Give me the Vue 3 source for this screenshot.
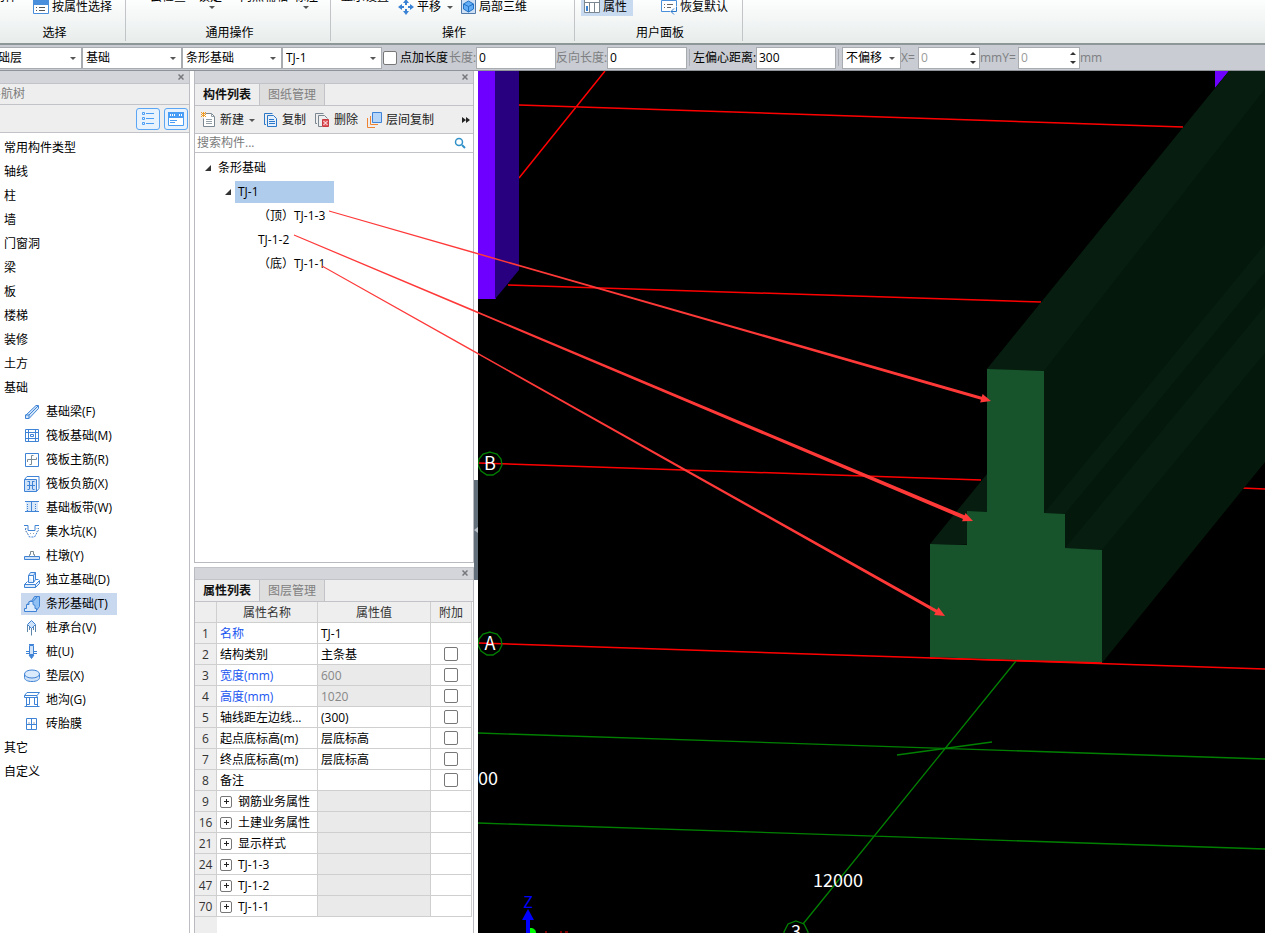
<script setup>
import { ref } from 'vue'

const categories = ['常用构件类型', '轴线', '柱', '墙', '门窗洞', '梁', '板', '楼梯', '装修', '土方', '基础']
const tailCategories = ['其它', '自定义']

const foundations = [
  { name: '基础梁(F)', icon: '<path d="M2 11 12 1.5h2.500v3L5 14.500H1.500V11z" fill="#d3e5f8"/><path d="M1.500 11H5v3.500M5 11l9-9"/>' },
  { name: '筏板基础(M)', icon: '<path d="M1.500 1.500h13v12h-13z"/><path d="M4.500 1.500v12M11.500 1.500v12M1.500 4.500h13M1.500 10.500h13"/><path d="M6.500 6.500h3v2h-3z"/>' },
  { name: '筏板主筋(R)', icon: '<path d="M1.500 1.500h13v13h-13z"/><path d="M9.500 3.500h-2v9h-2M3.500 10V7.500h9V5.500" stroke="#7d8b95"/>' },
  { name: '筏板负筋(X)', icon: '<path d="M.5 3.500 3 .5h12v12l-2.500 3"/><path d="M.5 3.500h12v12H.5z" fill="#cfe2f7"/><path d="M3 9.500h8M5.500 5v8M8.500 5v8M3.500 13.500h2M8.500 13.500h2M3.500 5.500h2M8.500 5.500h2"/>' },
  { name: '基础板带(W)', icon: '<path d="M2 2h12v10H2z" fill="#d8e8f9" stroke="none"/><path d="M1 1.500h14M1 11.500h14M7.500 1.500v10"/><path d="M3.500 4v7M11.500 4v7" stroke-dasharray="1 1"/>' },
  { name: '集水坑(K)', icon: '<path d="M0 1.500h4v5h7v-5h4"/><path d="M1.500 4v2l4 7h5l4-7V4" stroke-dasharray="2 1"/><path d="M3 9.500h9M2 4v4M13 4v4" stroke="#9aa7b1" stroke-dasharray="1 2"/>' },
  { name: '柱墩(Y)', icon: '<path d="M.5 8.500h15v3H.5z" fill="#cfe2f7"/><path d="M5.500 8.500v-2h1v-3h3v3h1v2" stroke="#7d8b95"/>' },
  { name: '独立基础(D)', icon: '<path d="M.5 12.500h11v3H.5zM.5 12.500l3-3M11.500 12.500l4-4v3l-4 4M4.500 10.500v-7l2-3h5v7l-2 3zM9.500 10.500v-7h-5M9.500 3.500l2-3M11.500 7.500h3" fill="#dcebfb"/>' },
  { name: '条形基础(T)', icon: '<path d="M7.500 5.500 10.500.5h5v10l-3 4M3.500 8l4-4" fill="#8fc0f3"/><path d="M.5 15.500v-3h2v-4h2.500v-3h4v3l2 1v3h1.500v3z" fill="#dcebfb"/><path d="m9 5.500 4-4.500"/>', active: true },
  { name: '桩承台(V)', icon: '<path d="m7.500.5 4 4-4 4-4-4z" fill="#cfe2f7"/><path d="M3.500 5v7M7.500 8v7.500M11.500 5v7M5.500 7v3M9.500 7v3" stroke="#5c86ad"/>' },
  { name: '桩(U)', icon: '<path d="M5.500 1.500h4v9h-4zM2 7.500h3.500M9.500 7.500H13M2 9.500h3.500M9.500 9.500H13" fill="#cfe2f7"/><path d="m5 11 2.500 3.500L10 11z" fill="#3f83d6"/><path d="M5 .5h5"/>' },
  { name: '垫层(X)', icon: '<path d="M.5 6.500v3C.5 12 3.500 13.500 8 13.500s7.500-1.500 7.500-4v-3" fill="#cfe2f7"/><ellipse cx="8" cy="6" rx="7.500" ry="4" fill="#dcebfb"/>' },
  { name: '地沟(G)', icon: '<path d="M.5 3.500 3 .5h12.500L13 3.500v2H.5zM.5 3.500H13M2.500 5.500v9M5.500 5.500v7M10.500 5.500v7M13.500 5v9M2.500 12.500h3M10.500 12.500h3M.5 14.500h15"/>' },
  { name: '砖胎膜', icon: '<path d="M2.500 2.500h10v11h-10zM7.500 2.500v11M2.500 8.500h10"/><path d="M5 6v2M10 6v2" stroke="#9aa7b1"/>' },
]

const properties = [
  { no: 1, name: '名称', value: 'TJ-1', key: true },
  { no: 2, name: '结构类别', value: '主条基', extra: true },
  { no: 3, name: '宽度(mm)', value: '600', key: true, locked: true, extra: true },
  { no: 4, name: '高度(mm)', value: '1020', key: true, locked: true, extra: true },
  { no: 5, name: '轴线距左边线...', value: '(300)', extra: true },
  { no: 6, name: '起点底标高(m)', value: '层底标高', extra: true },
  { no: 7, name: '终点底标高(m)', value: '层底标高', extra: true },
  { no: 8, name: '备注', value: '', extra: true },
  { no: 9, name: '钢筋业务属性', value: '', group: true, locked: true },
  { no: 16, name: '土建业务属性', value: '', group: true, locked: true },
  { no: 21, name: '显示样式', value: '', group: true, locked: true },
  { no: 24, name: 'TJ-1-3', value: '', group: true, locked: true },
  { no: 47, name: 'TJ-1-2', value: '', group: true, locked: true },
  { no: 70, name: 'TJ-1-1', value: '', group: true, locked: true },
]

const combos = [
  { id: 'floor', label: '楼层', value: '基础层' },
  { id: 'type', label: '类别', value: '基础' },
  { id: 'kind', label: '构件类型', value: '条形基础' },
  { id: 'member', label: '构件', value: 'TJ-1' },
]

const length = ref('0')
const reverse = ref('0')
const eccentric = ref('300')

// Tapered arrow: thin at the tail, widest where it meets the head.
function arrow(x1, y1, x2, y2, half) {
  const len = Math.hypot(x2 - x1, y2 - y1)
  const ux = (x2 - x1) / len
  const uy = (y2 - y1) / len
  const at = (d, o) => `${(x1 + ux * d - uy * o).toFixed(1)},${(y1 + uy * d + ux * o).toFixed(1)}`
  const neck = len - 10
  return [at(0, -0.5), at(neck, -half), at(neck, -4.5), at(len, 0), at(neck, 4.5), at(neck, half), at(0, 0.5)].join(' ')
}
const arrows = [
  arrow(329, 211, 991, 401, 1.5),
  arrow(294, 235, 973, 521, 2),
  arrow(322, 266, 945, 616, 1.5),
]
</script>

<template>
  <div class="app">
    <header class="ribbon">
      <section class="group g-select">
        <div class="clipped"><span>拾取构件</span></div>
        <div class="tools">
          <button type="button" class="tool">
            <svg width="16" height="16" fill="none" stroke="#4a8fdc"><path d="M.5.500h15v14H.5z" fill="#fff" /><path d="M0 0h16v6H0z" fill="#4a8fdc" stroke="none" /><path d="M3 8.500h1M3 11.500h1M6 8.500h6M6 11.500h6" stroke="#555" /></svg>
            按属性选择
          </button>
        </div>
        <h2>选择</h2>
      </section>
      <section class="group g-common">
        <div class="clipped"><span>云检查</span><span>锁定</span><span class="wide">两点辅轴</span><span>标注</span></div>
        <div class="tools"><i class="caret"></i><i class="caret"></i></div>
        <h2>通用操作</h2>
      </section>
      <section class="group g-operate">
        <div class="clipped"><span>显示设置</span></div>
        <div class="tools">
          <button type="button" class="tool">
            <svg width="16" height="16" fill="#3a83d4"><path d="m8 0 3 4H9v2H7V4H5zM8 16l-3-4h2v-2h2v2h2zM0 8l4-3v2h2v2H4v2zM16 8l-4 3V9h-2V7h2V5z" /></svg>
            平移 <i class="caret"></i>
          </button>
          <button type="button" class="tool">
            <svg width="15" height="16" fill="none" stroke="#527ba9"><path d="M.5.500h14v14H.5z" fill="#cfe0f4" /><path d="m7.500 2 5 3v5l-5 3-5-3V5z" fill="#62adf5" stroke="#2171c4" /><path d="m2.500 5 5 2.500 5-2.500M7.500 7.500V13" stroke="#2171c4" /></svg>
            局部三维
          </button>
        </div>
        <h2>操作</h2>
      </section>
      <section class="group g-panel">
        <div class="clipped"></div>
        <div class="tools">
          <button type="button" class="tool on">
            <svg width="16" height="16" fill="none" stroke="#7b8790"><path d="M.5.500h15v13H.5z" fill="#fff" /><path d="M.5 3.500h15M5.500 3.500v10M10.500 3.500v10" /><path d="M2 7h2v5H2z" fill="#3a83d4" stroke="none" /></svg>
            属性
          </button>
          <button type="button" class="tool">
            <svg width="16" height="16" fill="none" stroke="#4a8fdc"><path d="M9 12.500H.5V1.500h15v6" fill="#fff" /><path d="M3 5.500h1M3 8.500h1M6 5.500h6M6 8.500h4" stroke="#666" /><path d="M15.500 8v4.500H10m3-3-3 3 3 3" stroke="#2a78cc" /></svg>
            恢复默认
          </button>
        </div>
        <h2>用户面板</h2>
      </section>
    </header>

    <div class="options">
      <span v-for="c in combos" :key="c.id" class="combo" :class="c.id">
        <select :aria-label="c.label"><option>{{ c.value }}</option></select>
      </span>
      <label class="check"><input type="checkbox" /><span>点加长度</span></label>
      <label class="dim w-len" for="len">长度:</label>
      <input id="len" v-model="length" class="field" type="text" />
      <label class="dim w-rev" for="rev">反向长度:</label>
      <input id="rev" v-model="reverse" class="field" type="text" />
      <i class="sep"></i>
      <label class="w-ecc" for="ecc">左偏心距离:</label>
      <input id="ecc" v-model="eccentric" class="field" type="text" />
      <i class="sep"></i>
      <span class="combo offset"><select aria-label="偏移方式"><option>不偏移</option></select></span>
      <label class="dim w-x" for="ox">X=</label>
      <span class="spin"><input id="ox" type="text" value="0" disabled /><i class="up"></i><i class="down"></i></span>
      <label class="dim w-y" for="oy">mmY=</label>
      <span class="spin"><input id="oy" type="text" value="0" disabled /><i class="up"></i><i class="down"></i></span>
      <span class="dim">mm</span>
    </div>

    <main class="work">
      <aside class="nav">
        <div class="strip"><button type="button" class="close" aria-label="关闭导航树"><svg width="6" height="6"><path d="m.5.500 5 5M5.500.500l-5 5" stroke="#77777c" stroke-width="1.500" /></svg></button></div>
        <h3 class="navtitle"><span>导航树</span></h3>
        <div class="navtools">
          <button type="button" aria-label="列表"><svg width="14" height="14" fill="none" stroke="#4a9df5"><path d="M1.500.500h2v2h-2zM1.500 5.500h2v2h-2zM1.500 10.500h2v2h-2zM5 1.500h8M5 6.500h8M5 11.500h8" /></svg></button>
          <button type="button" aria-label="面板"><svg width="16" height="14" fill="none" stroke="#4a9df5"><path d="M.5.500h15v13H.5z" fill="#fff" /><path d="M0 0h16v6H0z" fill="#4a9df5" stroke="none" /><path d="M2 3h6M11 3h3" stroke="#fff" stroke-width="2" stroke-dasharray="1 1" /><path d="M2 8.500h7M2 10.500h5" /></svg></button>
        </div>
        <ul class="types">
          <li v-for="c in categories" :key="c">{{ c }}</li>
          <li v-for="f in foundations" :key="f.name" class="sub">
            <a href="#" :class="{ active: f.active }" @click.prevent>
              <svg width="16" height="16" fill="none" stroke="#3f83d6" v-html="f.icon"></svg>{{ f.name }}
            </a>
          </li>
          <li v-for="c in tailCategories" :key="c">{{ c }}</li>
        </ul>
      </aside>

      <div class="middle">
        <section class="pane members">
          <div class="strip"><button type="button" class="close" aria-label="关闭构件列表"><svg width="6" height="6"><path d="m.5.500 5 5M5.500.500l-5 5" stroke="#77777c" stroke-width="1.500" /></svg></button></div>
          <div class="tabs"><button type="button" class="tab current">构件列表</button><button type="button" class="tab">图纸管理</button></div>
          <div class="toolbar">
            <button type="button" class="new">
              <svg width="16" height="16" fill="none" stroke="#7b8790"><path d="M4.500 1.500h6l3 3v10h-11v-8" fill="#fff" /><path d="M10.500 1.500v3h3M5 7.500h6M5 9.500h6M5 11.500h6" stroke="#93a0a8" /><path d="M0 .500h5M0 2.500h5M0 4.500h5" stroke="#f19a20" stroke-dasharray="1 1" /><path d="M1 1.500h3M1 3.500h3" stroke="#f19a20" /></svg>
              新建 <i class="caret"></i>
            </button>
            <button type="button" class="copy">
              <svg width="14" height="16" fill="none" stroke="#2b78c9"><path d="M2 12.500H.5V1.500h8" /><path d="M3.500 3.500h6l3 3v8h-9z" fill="#e5f0fc" /><path d="M5 7.500h5M5 9.500h6M5 11.500h6" /></svg>
              复制
            </button>
            <button type="button" class="del">
              <svg width="16" height="16" fill="none" stroke="#7b8790"><path d="M2 11.500H.5V1.500h8M7 14.500H3.500v-11h6l3 3" /><path d="M7.500 7.500h6v7h-6z" fill="#e2555b" stroke="#c63b41" /><path d="m8.500 9 4 4M12.500 9l-4 4" stroke="#fff" /></svg>
              删除
            </button>
            <button type="button" class="layer">
              <svg width="16" height="16" fill="none" stroke="#ee8432"><path d="M.5 6v9.500H8" /><path d="M3.500 4v8.500H11" /><path d="M5.500.500h9v10h-9z" fill="#b5d5f9" stroke="#3f83d6" /></svg>
              层间复制
            </button>
            <button type="button" class="more" aria-label="更多"><svg width="8" height="6"><path d="m0 0 4 3-4 3zM4 0l4 3-4 3z" fill="#222" /></svg></button>
          </div>
          <label class="search">
            <input type="search" placeholder="搜索构件..." aria-label="搜索构件" />
            <svg width="12" height="12" fill="none" stroke="#3191c9" stroke-width="1.500"><circle cx="5" cy="5" r="3.500" /><path d="m8 8 3 3" stroke-width="2" /></svg>
          </label>
          <ul class="tree">
            <li class="lv1"><svg width="7" height="7"><path d="M6 0v6H0z" fill="#333" /></svg><span>条形基础</span></li>
            <li class="lv2"><svg width="7" height="7"><path d="M6 0v6H0z" fill="#333" /></svg><span class="picked">TJ-1</span></li>
            <li class="leaf">（顶）TJ-1-3</li>
            <li class="leaf">TJ-1-2</li>
            <li class="leaf">（底）TJ-1-1</li>
          </ul>
        </section>

        <section class="pane props">
          <div class="strip"><button type="button" class="close" aria-label="关闭属性列表"><svg width="6" height="6"><path d="m.5.500 5 5M5.500.500l-5 5" stroke="#77777c" stroke-width="1.500" /></svg></button></div>
          <div class="tabs"><button type="button" class="tab current">属性列表</button><button type="button" class="tab">图层管理</button></div>
          <div class="sheet">
            <table>
              <colgroup><col class="c-no" /><col class="c-name" /><col /><col class="c-extra" /></colgroup>
              <thead><tr><th></th><th>属性名称</th><th>属性值</th><th>附加</th></tr></thead>
              <tbody>
                <tr v-for="p in properties" :key="p.no">
                  <th scope="row">{{ p.no }}</th>
                  <td :class="{ key: p.key }">
                    <div class="name">
                      <button v-if="p.group" type="button" class="plus" :aria-label="'展开' + p.name"><svg width="5" height="5"><path d="M0 2.500h5M2.500 0v5" stroke="#222" /></svg></button>
                      {{ p.name }}
                    </div>
                  </td>
                  <td :class="{ locked: p.locked }">{{ p.value }}</td>
                  <td class="extra"><input v-if="p.extra" type="checkbox" :aria-label="p.name + ' 附加'" /></td>
                </tr>
              </tbody>
            </table>
            <div class="rest"></div>
          </div>
        </section>
      </div>

      <div class="splitter">
        <button type="button" aria-label="收起面板"><svg width="4" height="6"><path d="M4 0v6L0 3z" fill="#b9c0c7" /></svg></button>
      </div>

      <div class="view">
        <svg width="100%" height="100%">
          <g transform="translate(-478 -71)">
            <g stroke="#f00" stroke-width="1.500">
              <path d="M519 105 1183 127M605 71 519 178M508 285l533 17M478 463l503 17M478 643l787 26M1242 488l23 1" fill="none" />
            </g>
            <path d="M478 71h18v228h-18z" fill="#6e00ff" />
            <path d="M495 71h24v199l-24 29z" fill="#28007f" />
            <path d="M1215 71h14l-14 17z" fill="#6e00ff" />
            <g fill="none" stroke="#008000" stroke-width="1.300">
              <path d="M478 733l787 26M478 823l787 26M1016 661 803 924M897 755l95-13" />
              <path d="m490 452 7 2 4 5 1 6-3 6-6 4h-6l-6-4-3-6 1-6 4-5zM490 632l7 2 4 5 1 6-3 6-6 4h-6l-6-4-3-6 1-6 4-5zM796 921l8 3 4 8v8h-24v-8l4-8z" />
            </g>
            <path d="M987 369 1229 71h36v391l-163 201-58-150z" fill="#04190b" />
            <path d="M987 369 1229 71h36v18l-221 282zM1044 513l221-269v28l-200 242zM1065 548l200-242v47l-163 197zM930 544l57-70v71z" fill="#061d0f" />
            <path d="M987 369l57 2v142l21 1v34l37 2v113l-172-6V544l37 1v-34l20 1z" fill="#17542c" />
            <path d="M930 658l172 5" stroke="#f00" stroke-width="1.300" />
            <g class="canvas-text">
              <text x="490" y="470" text-anchor="middle">B</text>
              <text x="490" y="650" text-anchor="middle">A</text>
              <text x="478" y="785">00</text>
              <text x="838" y="887" text-anchor="middle">12000</text>
              <text x="796" y="938" text-anchor="middle">3</text>
              <text x="528" y="908" text-anchor="middle" class="axis">Z</text>
            </g>
            <path d="m528 909 6 11h-4v13h-4v-13h-4z" fill="#00f" />
            <path d="M530 928c4 0 6 2 6 5h-6z" fill="#0f0" />
            <path d="M545 932h2M560 932h2M565 932h3" stroke="#f00" />
          </g>
        </svg>
      </div>
    </main>

    <svg class="callouts" width="100%" height="100%" aria-hidden="true">
      <polygon v-for="a in arrows" :key="a" :points="a" fill="#ff3838" />
    </svg>
  </div>
</template>

<style>
html, body { margin: 0; overflow: hidden; }
</style>

<style scoped>
.app { position: relative; display: flex; flex-direction: column; height: 100vh; overflow: hidden; background: #fff; color: #000; font: 12px/16px "Open Sans", "Noto Sans CJK SC", sans-serif; white-space: nowrap; }
.app * { box-sizing: border-box; }
button, input, select { font: inherit; color: inherit; margin: 0; padding: 0; border: 0; background: none; }
h2, h3, ul { margin: 0; padding: 0; font: inherit; list-style: none; }
svg { flex: none; }
.caret { flex: none; width: 0; height: 0; border: 3px solid transparent; border-top-color: #555; border-bottom: 0; }

.ribbon { display: flex; flex: none; height: 45px; padding-bottom: 2px; border-bottom: 2px solid #8c9797; background: linear-gradient(#fdfefe, #e7eceb); overflow: hidden; }
.group { display: flex; flex-direction: column; justify-content: flex-end; border-right: 1px solid #c2c5c8; }
.group h2 { flex: none; height: 16px; text-align: center; }
.g-select { width: 126px; }
.g-select h2 { padding-right: 16px; }
.g-common { width: 205px; }
.g-operate { width: 244px; }
.g-panel { width: 168px; }
.g-common h2, .g-operate h2, .g-panel h2 { padding-left: 3px; }
.clipped { display: flex; flex: none; height: 16px; margin-bottom: -7px; gap: 12px; }
.g-select .clipped { margin-left: -31px; }
.g-common .clipped { padding-left: 24px; }
.g-operate .clipped { padding-left: 10px; }
.clipped .wide { margin-left: 6px; }
.g-common .clipped span:last-child { margin-left: -6px; }
.tools { display: flex; flex: none; align-items: center; height: 18px; margin-bottom: 9px; }
.g-select .tools { padding-left: 33px; }
.g-common .tools { padding-left: 83px; gap: 88px; }
.g-operate .tools { padding-left: 67px; gap: 8px; }
.g-panel .tools { padding-left: 6px; gap: 28px; }
.tool { display: flex; align-items: center; gap: 3px; height: 18px; }
.tool .caret { margin-left: 3px; }
.tool.on { background: #c8daf0; width: 52px; padding-left: 3px; }

.options { display: flex; flex: none; align-items: center; height: 26px; border-bottom: 1px solid #8f949b; background: #c9ccd2; }
.combo { position: relative; flex: none; width: 100px; height: 22px; border: 1px solid #a8abb0; background: #fff; }
.combo select { display: block; width: 100%; height: 20px; padding-left: 3px; appearance: none; outline: 0; }
.combo::after { content: ""; position: absolute; right: 5px; top: 9px; border: 3px solid transparent; border-top-color: #555; border-bottom: 0; pointer-events: none; }
.combo.floor { margin-left: -18px; }
.combo.offset { width: 59px; }
.check { display: flex; align-items: center; gap: 3px; width: 67px; padding-left: 1px; }
input[type="checkbox"] { flex: none; width: 14px; height: 14px; appearance: none; border: 1px solid #777; border-radius: 2px; background: #fff; }
.dim { color: #7d7f82; }
.w-len { width: 27px; }
.w-rev { width: 51px; }
.w-ecc { width: 63px; }
.w-x { width: 17px; }
.w-y { width: 38px; }
.options > label { flex: none; }
.field { flex: none; width: 80px; height: 22px; padding-left: 2px; border: 1px solid #a8abb0; background: #fff; }
.sep { flex: none; width: 1px; height: 17px; margin: 0 3px 0 2px; background: #a9acb2; }
.spin { position: relative; flex: none; width: 62px; height: 22px; border: 1px solid #a8abb0; background: #fff; }
.spin input { width: 40px; height: 20px; padding-left: 2px; color: #9a9a9a; }
.spin i { position: absolute; right: 3px; border: 3px solid transparent; }
.spin .up { top: 4px; border-bottom-color: #333; border-top: 0; }
.spin .down { bottom: 4px; border-top-color: #333; border-bottom: 0; }

.work { display: flex; flex: 1; min-height: 0; }
.strip { display: flex; flex: none; align-items: center; justify-content: flex-end; height: 13px; padding-right: 5px; border-bottom: 1px solid #c2c3c9; background: #d4d5da; }
.close { display: flex; }
.nav { display: flex; flex: none; flex-direction: column; width: 190px; border-right: 1px solid #bcbec4; margin-right: 4px; }
.navtitle { flex: none; height: 21px; border-bottom: 1px solid #c2c3c9; background: #eee; color: #7b7b7b; line-height: 20px; }
.navtitle span { margin-left: -11px; }
.navtools { display: flex; flex: none; align-items: center; justify-content: flex-end; gap: 4px; height: 28px; padding-right: 1px; border-bottom: 1px solid #c2c3c9; background: #eee; }
.navtools button { display: flex; align-items: center; justify-content: center; width: 24px; height: 22px; border: 1px solid #5aa6f4; border-radius: 3px; background: #e8f2fd; }
.types { padding: 3px 0 0 4px; }
.types li { height: 24px; line-height: 24px; }
.types .sub { display: flex; align-items: center; padding-left: 17px; }
.sub a { display: flex; align-items: center; gap: 6px; height: 22px; padding: 0 9px 0 3px; color: inherit; text-decoration: none; }
.sub a.active { background: #c8d9ef; }

.middle { display: flex; flex: none; flex-direction: column; gap: 4px; width: 280px; }
.pane { display: flex; flex-direction: column; min-height: 0; border: 1px solid #b8bac0; border-top: 0; overflow: hidden; }
.members { flex: 492 1 0; }
.props { flex: 366 1 0; border-top: 1px solid #c2c3c9; border-bottom: 0; }
.tabs { display: flex; flex: none; height: 22px; border-bottom: 1px solid #c2c3c9; background: #eee; }
.tab { width: 65px; padding-top: 1px; border-right: 1px solid #c2c3c9; background: #dedede; color: #808080; }
.tab.current { background: #eee; color: #111; font-weight: bold; }
.toolbar { display: flex; flex: none; align-items: center; height: 28px; padding: 1px 3px 0 6px; border-bottom: 1px solid #c2c3c9; background: #eee; color: #222; }
.toolbar button { display: flex; align-items: center; gap: 3px; }
.toolbar .caret { margin-left: 2px; }
.new { width: 63px; }
.copy { width: 51px; }
.toolbar .copy { gap: 4px; }
.del { width: 52px; }
.more { margin-left: auto; }
.search { display: flex; flex: none; align-items: center; height: 19px; padding: 0 7px 0 2px; border-bottom: 1px solid #c2c3c9; }
.search input { flex: 1; min-width: 0; appearance: none; outline: 0; }
.search input::placeholder { color: #7b7b7b; opacity: 1; }
.tree { padding-top: 3px; }
.tree li { display: flex; align-items: center; height: 24px; }
.lv1 { padding-left: 10px; gap: 6px; }
.lv2 { padding-left: 30px; gap: 3px; }
.picked { width: 99px; height: 22px; padding-left: 3px; background: #b0ccec; line-height: 22px; }
.leaf { padding-left: 63px; }
.props .strip { height: 12px; }
.sheet { display: flex; flex: 1; flex-direction: column; min-height: 0; }
table { width: 277px; flex: none; table-layout: fixed; border-collapse: separate; border-spacing: 0; }
.c-no { width: 22px; }
.c-name { width: 101px; }
.c-extra { width: 41px; }
th, td { height: 21px; padding: 2px 0 0 3px; border-right: 1px solid #cfcfcf; border-bottom: 1px solid #cfcfcf; font-weight: normal; text-align: left; overflow: hidden; }
th { padding-left: 0; background: #eee; color: #333; text-align: center; }
.name { display: flex; align-items: center; gap: 6px; }
.plus { display: flex; flex: none; align-items: center; justify-content: center; width: 12px; height: 12px; border: 1px solid #777; border-radius: 2px; }
.key { color: #1a56f0; }
.locked { background: #eaeaea; color: #878787; }
.extra { padding: 0; text-align: center; }
.extra input { display: block; margin: 0 auto; }
.rest { flex: 1; width: 22px; background: #eee; }

.splitter { display: flex; flex: none; flex-direction: column; width: 4px; }
.splitter::before { content: ""; flex: 409 1 0; }
.splitter::after { content: ""; flex: 353 1 0; }
.splitter button { display: flex; flex: none; align-items: center; height: 100px; background: #646f7c; }
.view { flex: 1; min-width: 0; background: #000; }
.view svg { display: block; }
.canvas-text { fill: #fff; font: 18px "Noto Sans CJK SC", sans-serif; }
.canvas-text .axis { fill: #00f; font-size: 16px; }
.callouts { position: absolute; inset: 0; pointer-events: none; }
</style>
